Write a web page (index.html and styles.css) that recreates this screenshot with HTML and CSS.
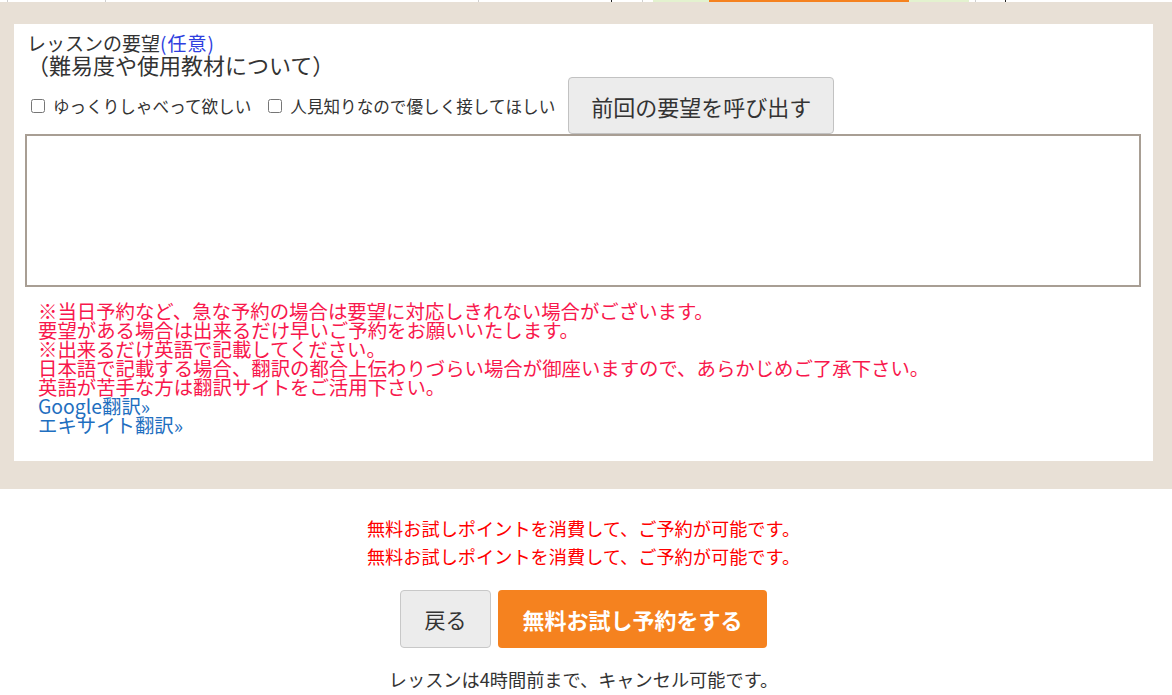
FILE: index.html
```html
<!DOCTYPE html>
<html>
<head>
    <meta charset="utf-8">
    <link rel="stylesheet" href="styles.css">
</head>
<body>
    <div class="top-strip">
        <span class="cell c1"></span>
        <span class="cell c2"></span>
        <span class="cell c3"></span>
        <span class="cell c4 dark"></span>
        <span class="cell c5"></span>
        <span class="cell c6 none"></span>
        <span class="cell c7 green none"></span>
        <span class="cell c8 orange none"></span>
        <span class="cell c9 green none"></span>
        <span class="cell c10"></span>
        <span class="cell c11 dark"></span>
    </div>

    <div class="form-wrap">
        <div class="panel">
            <div class="req-head">
                <div class="req-title">レッスンの要望<span class="optional">(任意)</span></div>
                <div class="req-sub">（難易度や使用教材について）</div>
                <div class="req-opts">
                    <label class="opt"><input type="checkbox">ゆっくりしゃべって欲しい</label>
                    <label class="opt"><input type="checkbox">人見知りなので優しく接してほしい</label>
                    <button class="btn-prev">前回の要望を呼び出す</button>
                </div>
            </div>

            <textarea class="req-text"></textarea>

            <div class="notes">
                <div>※当日予約など、急な予約の場合は要望に対応しきれない場合がございます。</div>
                <div>要望がある場合は出来るだけ早いご予約をお願いいたします。</div>
                <div>※出来るだけ英語で記載してください。</div>
                <div>日本語で記載する場合、翻訳の都合上伝わりづらい場合が御座いますので、あらかじめご了承下さい。</div>
                <div>英語が苦手な方は翻訳サイトをご活用下さい。</div>
                <a href="#">Google翻訳»</a>
                <a href="#">エキサイト翻訳»</a>
            </div>
        </div>
    </div>

    <div class="submit">
        <p class="point-msg">無料お試しポイントを消費して、ご予約が可能です。</p>
        <p class="point-msg">無料お試しポイントを消費して、ご予約が可能です。</p>
        <div class="submit-btns">
            <button class="btn-back">戻る</button>
            <button class="btn-trial">無料お試し予約をする</button>
        </div>
        <p class="cancel-msg">レッスンは4時間前まで、キャンセル可能です。</p>
    </div>
</body>
</html>
```

FILE: styles.css
```css
* {
    box-sizing: border-box;
}

body {
    font-family: "Noto Sans CJK JP", "Noto Sans", sans-serif;
    margin: 0;
    padding: 0;
    color: #333;
    background-color: #fff;
}

/* tail of the table above */
.top-strip {
    display: flex;
    height: 2px;
    background-color: #fff;
}

.top-strip .cell {
    box-sizing: content-box;
    height: 2px;
    border-right: 1px solid #cfcfcf;
}

.top-strip .dark {
    border-right-color: #222;
}

.top-strip .none {
    border-right: none;
}

.c1 { width: 7px; }
.c2 { width: 97px; }
.c3 { width: 372px; }
.c4 { width: 132px; }
.c5 { width: 30px; }
.c6 { width: 10px; }
.c7 { width: 56px; }
.c8 { width: 200px; }
.c9 { width: 60px; }
.c10 { width: 6px; }
.c11 { width: 29px; }

.green {
    background-color: #e3f2cf;
}

.orange {
    background-color: #f5821f;
}

.form-wrap {
    background-color: #e8e0d6;
    padding: 22px 19px 28px 14px;
}

.panel {
    background-color: #fff;
    padding: 8px 12px 27px 11px;
}

.req-head {
    padding-left: 2px;
}

.req-title {
    font-size: 19px;
    line-height: 21px;
}

.req-title .optional {
    color: #2f3fe0;
    letter-spacing: 1px;
}

.req-sub {
    font-size: 22px;
    line-height: 22px;
}

.req-opts {
    display: flex;
    align-items: center;
    margin-top: 2px;
}

.opt {
    display: flex;
    align-items: center;
    font-size: 16.6px;
    margin-right: 13px;
}

.opt input {
    width: 14px;
    height: 14px;
    margin: 0 8px 0 4px;
}

.btn-prev {
    font-family: inherit;
    font-size: 22px;
    color: #333;
    height: 57px;
    padding: 0 22px;
    background-color: #ececec;
    border: 1px solid #c2c2c2;
    border-radius: 4px;
    cursor: pointer;
}

.req-text {
    display: block;
    width: 100%;
    height: 153px;
    border: 2px solid #a89e94;
    resize: none;
    margin: 0;
}

.notes {
    margin-top: 14px;
    padding-left: 13px;
    font-size: 19.4px;
    line-height: 19px;
    color: #f8174c;
}

.notes a {
    display: block;
    color: #1f6fc0;
    text-decoration: none;
}

.submit {
    text-align: center;
    padding: 25px 19px 0 14px;
}

.point-msg {
    margin: 0;
    font-size: 18.2px;
    line-height: 28px;
    color: #ff0000;
}

.submit-btns {
    display: flex;
    justify-content: center;
    gap: 7px;
    margin-top: 20px;
}

.submit-btns button {
    font-family: inherit;
    height: 58px;
    border-radius: 4px;
    cursor: pointer;
}

.btn-back {
    width: 91px;
    font-size: 21px;
    color: #333;
    background-color: #ececec;
    border: 1px solid #c8c8c8;
}

.btn-trial {
    width: 269px;
    font-size: 22px;
    font-weight: bold;
    color: #fff;
    background-color: #f5821f;
    border: none;
}

.cancel-msg {
    margin: 17px 0 0;
    font-size: 18.2px;
    line-height: 28px;
    color: #333;
}
```
